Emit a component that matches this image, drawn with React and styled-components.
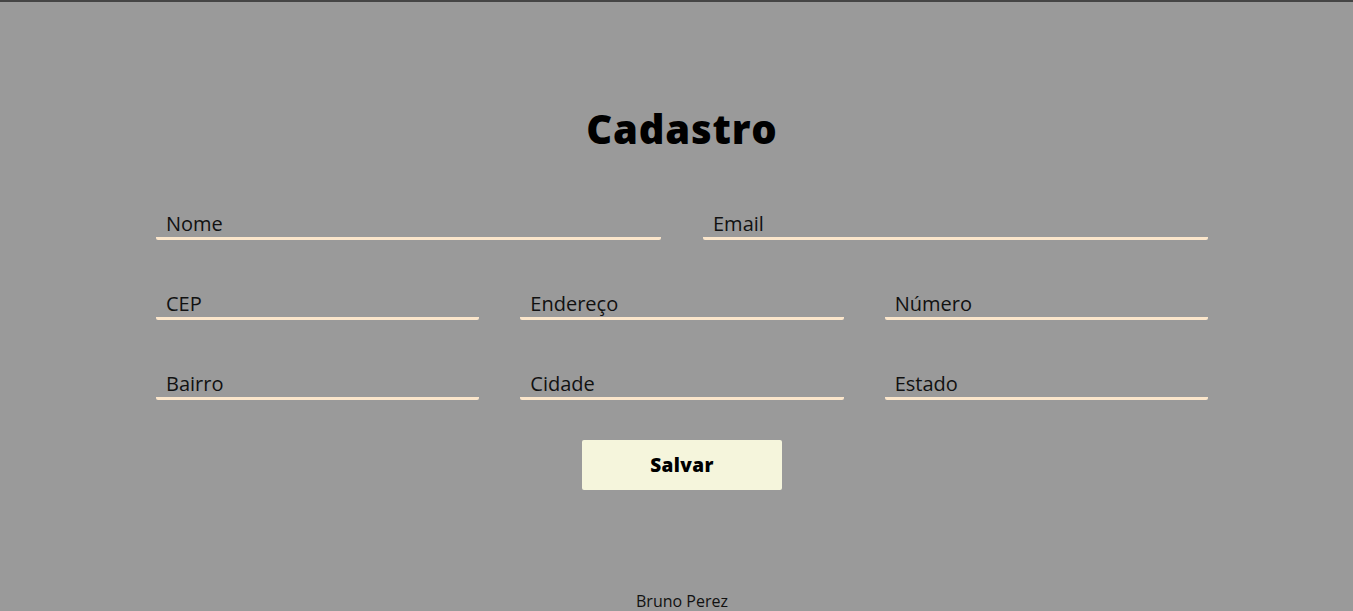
import React from "react";
import styled, { createGlobalStyle } from "styled-components";

const Global = createGlobalStyle`
  html, body { margin: 0; padding: 0; }
  body {
    background: #9a9a9a;
    font-family: "Open Sans", "Liberation Sans", sans-serif;
    border-top: 2px solid #454545;
    overflow: hidden;
  }
`;

const Page = styled.main`
  display: flex;
  flex-direction: column;
  align-items: center;
  padding-top: 101px;
  padding-left: 11px;
  min-height: 609px;
  box-sizing: border-box;
`;

const Title = styled.h1`
  margin: 0;
  font-family: "Open Sans", sans-serif;
  font-weight: 800;
  font-size: 40px;
  line-height: 52px;
  color: #000;
  letter-spacing: 0.8px;
`;

const Form = styled.form`
  width: 1052px;
  margin-top: 50px;
  display: flex;
  flex-direction: column;
  gap: 45px;
`;

const Row = styled.div`
  display: grid;
  grid-template-columns: repeat(${(p) => p.cols}, 1fr);
  column-gap: ${(p) => (p.cols === 2 ? 42 : 41)}px;
`;

const Field = styled.input`
  display: block;
  width: 100%;
  box-sizing: border-box;
  height: 35px;
  background: transparent;
  border: none;
  border-bottom: 3px solid #fbe6cb;
  border-radius: 2px;
  padding: 5px 10px 0;
  font-family: "Open Sans", sans-serif;
  font-size: 20px;
  color: #111;
  outline: none;
  &::placeholder { color: #111; }
`;

const Button = styled.button`
  align-self: center;
  width: 200px;
  height: 50px;
  margin-top: -5px;
  background: #f5f5dc;
  border: none;
  border-radius: 2px;
  font-family: "Open Sans", sans-serif;
  font-weight: 800;
  font-size: 19px;
  color: #000;
  letter-spacing: 0.4px;
`;

const Footer = styled.footer`
  margin-top: 100px;
  font-family: "Open Sans", sans-serif;
  font-size: 16px;
  color: #111;
`;

export default function App() {
  return (
    <>
      <Global />
      <Page>
        <Title>Cadastro</Title>
        <Form onSubmit={(e) => e.preventDefault()}>
          <Row cols={2}>
            <Field placeholder="Nome" />
            <Field placeholder="Email" />
          </Row>
          <Row cols={3}>
            <Field placeholder="CEP" />
            <Field placeholder="Endereço" />
            <Field placeholder="Número" />
          </Row>
          <Row cols={3}>
            <Field placeholder="Bairro" />
            <Field placeholder="Cidade" />
            <Field placeholder="Estado" />
          </Row>
          <Button type="submit">Salvar</Button>
        </Form>
        <Footer>Bruno Perez</Footer>
      </Page>
    </>
  );
}
